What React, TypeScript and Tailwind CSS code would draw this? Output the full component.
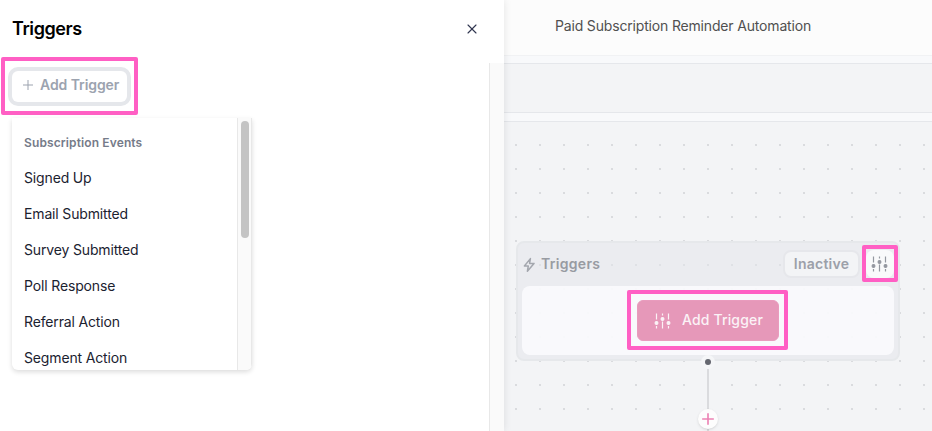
import { LuX } from 'react-icons/lu';

const events = [
    'Signed Up',
    'Email Submitted',
    'Survey Submitted',
    'Poll Response',
    'Referral Action',
    'Segment Action',
];

function SlidersIcon({ className }: { className?: string }) {
    return (
        <svg
            viewBox="0 0 18 18"
            className={className}
            fill="currentColor"
            stroke="currentColor"
            strokeWidth="1.2"
        >
            <path
                d="M2.5 1.5v6M2.5 14v2.5M8.5 1.5v2M8.5 9.5v7M14.5 1.5v6M14.5 14v2.5"
                fill="none"
            />
            <circle cx="2.5" cy="11" r="1.4" />
            <circle cx="8.5" cy="7" r="1.4" />
            <circle cx="14.5" cy="11" r="1.4" />
        </svg>
    );
}

function BoltIcon() {
    return (
        <svg
            viewBox="0 0 16 16"
            className="size-4 text-[#a4a7ae]"
            fill="none"
            stroke="currentColor"
            strokeWidth="1.5"
            strokeLinejoin="round"
        >
            <path d="M8.4 2.6 2.4 10h3.9L5.4 15.2l6.6-7.8H7.6z" />
        </svg>
    );
}

function PlusIcon({ className }: { className?: string }) {
    return (
        <svg viewBox="0 0 12 12" className={className} stroke="currentColor">
            <path d="M6 1v10M1 6h10" />
        </svg>
    );
}

function TriggerMenu() {
    return (
        <div className="mt-4 ml-3 flex h-[252px] w-60 overflow-hidden rounded-b-md bg-white shadow-[0_2px_5px_rgba(0,0,0,0.14)]">
            <ul className="flex-1 pt-1.5 pl-3">
                <li className="flex h-9 items-center pt-0.5 text-xs font-semibold tracking-[0.12px] text-[#757b89]">
                    Subscription Events
                </li>
                {events.map((event) => (
                    <li
                        key={event}
                        className="flex h-9 items-center text-sm tracking-[-0.15px] text-[#1b2230]"
                    >
                        {event}
                    </li>
                ))}
            </ul>
            <div className="w-[15px] border-x border-[#e8e8e8] bg-[#fafafa] px-[3px] pt-[3px]">
                <div className="h-[117px] w-2 rounded-full bg-[#c4c4c4]" />
            </div>
        </div>
    );
}

function Drawer() {
    return (
        <aside className="relative z-10 flex w-[504px] flex-none flex-col bg-white shadow-[0_0_8px_rgba(0,0,0,0.1)]">
            <header className="flex h-[63px] flex-none items-start justify-between pt-[15px] pr-6 pl-3">
                <h2 className="text-lg leading-7 font-semibold tracking-[-0.42px] text-black">
                    Triggers
                </h2>
                <LuX className="mt-1.5 size-4" color="#303650" strokeWidth={1.7} />
            </header>
            <div className="flex flex-1">
                <div className="relative flex-1 pt-2">
                    <button className="ml-3 flex h-[31px] w-[115px] items-center rounded-md bg-white pb-[3px] pl-2.5 text-sm font-semibold tracking-[-0.08px] text-[#9ca3af] ring-4 ring-[#e5e7eb]">
                        <PlusIcon className="mr-1.5 size-3" />
                        Add Trigger
                    </button>
                    <TriggerMenu />
                    <div className="absolute top-[-6px] left-px h-[58px] w-[137px] rounded-[2px] border-4 border-[#ff5fc4]" />
                </div>
                <div className="w-[15px] border-l border-[#e8e8e8] bg-[#fafafa]" />
            </div>
        </aside>
    );
}

function Canvas() {
    return (
        <div className="relative flex-1 overflow-hidden border-t border-[#e5e7eb] bg-[#f3f4f6] bg-[radial-gradient(circle_at_center,#d3d5d9_0.6px,transparent_1.2px)] bg-[size:24px_24px] bg-[position:0px_11px]">
            <section className="absolute top-[119px] left-3 h-[120px] w-96 rounded-lg border-2 border-[#e6e8eb] bg-[#e4e5eb]/55 px-1 pt-1.5">
                <div className="flex h-[30px] items-center">
                    <BoltIcon />
                    <h3 className="ml-[3px] flex-1 text-sm font-semibold tracking-[0.3px] text-[#989ba2]">
                        Triggers
                    </h3>
                    <span className="mr-1.5 flex h-7 w-[77px] items-center justify-center rounded-lg border-2 border-[#e6e7eb] bg-[#f3f4f6] text-sm font-semibold tracking-[0.25px] text-[#9ca0a9]">
                        Inactive
                    </span>
                    <button className="flex size-7 items-center justify-center rounded-lg bg-[#f9fafb] text-[#9498a0]">
                        <SlidersIcon className="size-[18px]" />
                    </button>
                </div>
                <div className="mt-[7px] flex h-[69px] items-center justify-center rounded-lg bg-[#fcfcfe]/85">
                    <button className="flex h-[41px] w-[142px] items-center rounded-md border border-[#e99bbd] bg-[#e698b9] pl-4 text-sm font-medium tracking-[0.15px] text-[#fbf2f6]">
                        <SlidersIcon className="mr-2.5 size-[18px]" />
                        <span className="-mt-px">Add Trigger</span>
                    </button>
                </div>
            </section>
            <div className="absolute top-[233px] left-[197px] flex w-[14px] flex-col items-center">
                <div className="flex size-3.5 items-center justify-center rounded-full bg-[#f5f6f8]">
                    <div className="size-1.5 rounded-full bg-[#656770]" />
                </div>
                <div className="h-[70px] w-0.5 bg-[#dadbde]" />
            </div>
            <div className="absolute top-[287px] left-[194px] flex size-5 items-center justify-center rounded-full bg-[#fdfdfd] text-[#ec82b4] shadow-sm">
                <PlusIcon className="size-3.5 stroke-[1.4]" />
            </div>
            <div className="absolute top-[168px] left-[123px] h-[60px] w-[161px] rounded-[2px] border-4 border-[#ff5fc4]" />
            <div className="absolute top-[123px] left-[358px] h-[37px] w-9 rounded-[2px] border-4 border-[#ff5fc4]" />
        </div>
    );
}

export default function App() {
    return (
        <div className="flex h-[431px] w-[932px] overflow-hidden bg-white font-['Inter',sans-serif]">
            <Drawer />
            <main className="flex flex-1 flex-col bg-[#f8f9fb]">
                <header className="flex h-14 items-center border-b border-[#f1f2f4] bg-[#fcfcfc] pb-[3px] pl-[51px] text-sm tracking-[-0.17px] text-[#505050]">
                    Paid Subscription Reminder Automation
                </header>
                <div className="mt-[7px] mb-2 h-[50px] border-y border-[#e5e7eb] bg-[#f3f4f6]" />
                <Canvas />
            </main>
        </div>
    );
}
